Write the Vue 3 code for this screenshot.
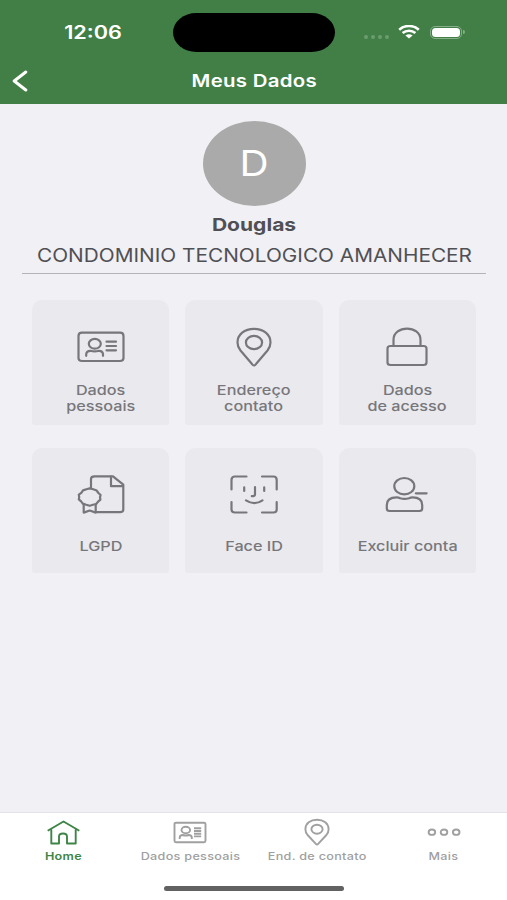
<template>
  <div class="screen">

    <header class="header">

      <div class="status">
        <div class="clock"><span class="wide">12:06</span></div>
        <div class="island"></div>
        <div class="signals">
          <div class="dots"><i v-for="n in 4" :key="n"></i></div>
          <svg class="wifi" width="22" height="14" viewBox="0 0 22 14">
            <path d="M1.2 4.7C6.6-.2 15.4-.2 20.8 4.7"/>
            <path d="M4.6 8.1C8.3 4.9 13.7 4.9 17.4 8.1"/>
            <path d="M7.4 10.6Q11 7.8 14.6 10.6L11 13.6Z"/>
          </svg>
          <div class="battery"><b></b></div>
        </div>
      </div>

      <div class="nav">
        <button class="back" type="button" aria-label="Voltar">
          <svg width="16" height="22" viewBox="0 0 16 22">
            <path d="M13.8 2L2.2 11L13.8 20"/>
          </svg>
        </button>
        <h1><span class="wide">Meus Dados</span></h1>
      </div>

    </header>

    <main class="content">

      <section class="profile">
        <div class="avatar"><span class="wide">D</span></div>
        <h2><span class="wide">Douglas</span></h2>
        <p><span class="wide">CONDOMINIO TECNOLOGICO AMANHECER</span></p>
      </section>

      <section class="grid">
        <button v-for="card in cards" :key="card.icon" class="card" type="button">
          <svg class="card-icon" width="50" height="42" viewBox="0 0 50 42">
            <path v-for="(d,i) in icons[card.icon]" :key="i" :d="d"/>
          </svg>
          <span class="label" :class="{ single: card.lines.length===1 }">
            <span v-for="line in card.lines" :key="line" class="wide">{{ line }}</span>
          </span>
        </button>
      </section>

    </main>

    <footer class="footer">
      <nav class="tabs">
        <a v-for="tab in tabs" :key="tab.label" class="tab" :class="{ active: tab.active }">
          <svg width="36" height="28" viewBox="0 0 36 28">
            <path v-for="(d,i) in icons[tab.icon]" :key="i" :d="d"/>
          </svg>
          <span class="wide">{{ tab.label }}</span>
        </a>
      </nav>
      <div class="indicator"></div>
    </footer>

  </div>
</template>

<script setup>

const icons={

card:[
'M6 6.7H44Q47.5 6.7 47.5 10V32Q47.5 35 44 35H6Q2.5 35 2.5 32V10Q2.5 6.7 6 6.7Z',
'M12.8 17.8a6 4.9 0 1 0 12 0a6 4.9 0 1 0 -12 0',
'M10.2 29.8V28.5Q10.2 24.8 14.5 24.8Q18.6 26 23 24.8Q27 24.8 27 28.5V29.8',
'M30.5 15.7H40M30.5 20H40M30.5 24.3H40'
],

pin:[
'M25 39.5Q24 39.5 22.8 37.8L11.5 24.5Q8.5 20.8 8.5 16.5C8.5 8.5 15.5 2.8 25 2.8S41.5 8.5 41.5 16.5Q41.5 20.8 38.5 24.5L27.2 37.8Q26 39.5 25 39.5Z',
'M16.9 16.5a8.1 6.6 0 1 0 16.2 0a8.1 6.6 0 1 0 -16.2 0'
],

lock:[
'M8.5 20H41.5Q44.5 20 44.5 22.5V36.5Q44.5 39 41.5 39H8.5Q5.5 39 5.5 36.5V22.5Q5.5 20 8.5 20Z',
'M11.5 19.5V14C11.5 -1.2 38.5 -1.2 38.5 14V19.5'
],

seal:[
'M15 14V5Q15 2.3 18.5 2.3H37L47.3 10.7V35.5Q47.3 38.2 44 38.2H20.5',
'M35 2.5V12.2H47',
'M13.7 14.4L17.2 15.2L20.7 16.6L22.4 19L24.6 21L24 23.2L24.4 25.6L22.1 27.6L20.2 30L17 30.8L13.7 31.8L10.2 30.8L6.8 29.6L5.1 27.4L2.8 25.4L3.2 23.2L2.8 20.6L5.3 18.8L7 16.4L10.4 15.2Z',
'M7.7 30.5V38.6L13.7 36.5L19.7 38.6V30.5'
],

face:[
'M2.5 15.5V6Q2.5 2.5 6 2.5H17.5M33 2.5H44.5Q47.7 2.5 47.7 6V15.5M47.7 28V35.5Q47.7 38.5 44.5 38.5H33M17.5 38.5H6Q2.5 38.5 2.5 35.5V28',
'M15.2 13.4V16.9M35.2 13.4V16.9M26 13.2V20.4Q26 22.3 22.8 22.2M17 26.3Q25.5 31.8 33.5 26.3'
],

remove:[
'M12.3 12.2a10 8.2 0 1 0 20 0a10 8.2 0 1 0 -20 0',
'M7.6 37Q4.8 37 4.8 34.6V31Q4.8 23.4 14.6 23.4Q16.6 23.4 18.2 24.2Q22.6 25.4 27 24.2Q28.6 23.4 30.6 23.4Q40.2 23.4 40.2 31V34.6Q40.2 37 37.4 37Z',
'M33.8 19.3H44.6'
],

home:[
'M2.7 12.8L18.5 3.5L34.3 12.8M6.3 11.5V25.5H14V18.5Q14 15.5 18 15.5T22 18.5V25.5H30.7V11.5'
],

tabCard:[
'M4 4.7H32Q33.5 4.7 33.5 6V22.7Q33.5 24.2 32 24.2H4Q2.5 24.2 2.5 22.7V6Q2.5 4.7 4 4.7Z',
'M9.5 12a4.3 3.3 0 1 0 8.6 0a4.3 3.3 0 1 0 -8.6 0',
'M7.7 21V19.8Q7.7 17 10.8 17Q13.8 18 16.8 17Q19.8 17 19.8 19.8V21',
'M22 10.3H29.2M22 13H29.2M22 15.7H29.2M22 18.4H29.2'
],

tabPin:[
'M18 26.6Q17.4 26.6 16.6 25.6L8.6 17Q6.4 14.4 6.4 11.2C6.4 5.4 11.4 1.7 18 1.7S29.6 5.4 29.6 11.2Q29.6 14.4 27.4 17L19.4 25.6Q18.6 26.6 18 26.6Z',
'M12.4 11.2a5.6 4.5 0 1 0 11.2 0a5.6 4.5 0 1 0 -11.2 0'
],

more:[
'M2.6 14.2a3.3 2.7 0 1 0 6.6 0a3.3 2.7 0 1 0 -6.6 0',
'M14.7 14.2a3.3 2.7 0 1 0 6.6 0a3.3 2.7 0 1 0 -6.6 0',
'M26.9 14.2a3.3 2.7 0 1 0 6.6 0a3.3 2.7 0 1 0 -6.6 0'
]

}

const cards=[
{icon:'card',lines:['Dados','pessoais']},
{icon:'pin',lines:['Endereço','contato']},
{icon:'lock',lines:['Dados','de acesso']},
{icon:'seal',lines:['LGPD']},
{icon:'face',lines:['Face ID']},
{icon:'remove',lines:['Excluir conta']}
]

const tabs=[
{icon:'home',label:'Home',active:true},
{icon:'tabCard',label:'Dados pessoais'},
{icon:'tabPin',label:'End. de contato'},
{icon:'more',label:'Mais'}
]

</script>

<style>

body{
margin:0;
background:#f1f0f5;
}

</style>

<style scoped>

.screen{
height:900px;
display:flex;
flex-direction:column;
overflow:hidden;
background:#f1f0f5;
font-family:Inter,"Liberation Sans",sans-serif;
color:#505054;
}

h1,h2,p{
margin:0;
}

button{
border:none;
background:none;
padding:0;
font:inherit;
color:inherit;
}

/* letterforms are wider than tall across the whole screen */
.wide{
display:inline-block;
white-space:nowrap;
transform:scaleX(1.2);
}

.header{
height:104px;
flex:none;
background:#417f46;
color:#fff;
}

.status{
height:58px;
padding-top:6px;
box-sizing:border-box;
display:grid;
grid-template-columns:173px 162px 1fr;
align-items:center;
}

.clock{
padding-left:13px;
text-align:center;
font-size:18px;
font-weight:600;
}

.island{
height:39px;
border-radius:24px/20px;
background:#000;
}

.signals{
display:flex;
align-items:center;
padding-left:29px;
}

.dots{
display:flex;
gap:3px;
padding-top:9px;
margin-right:9px;
}

.dots i{
width:4px;
height:4px;
border-radius:50%;
background:#6a9c6e;
}

.battery{
position:relative;
width:32px;
height:13px;
box-sizing:border-box;
margin-left:10px;
padding:1px;
border:1px solid #86af89;
border-radius:5px;
}

.battery b{
display:block;
width:28px;
height:9px;
border-radius:3.5px;
background:#fff;
}

.battery::after{
content:'';
position:absolute;
right:-4px;
top:3.5px;
width:2px;
height:4px;
border-radius:0 2px 2px 0;
background:#86af89;
}

.nav{
height:46px;
display:grid;
grid-template-columns:40px 1fr 40px;
align-items:center;
}

.back{
display:flex;
padding-left:12px;
}

h1{
padding-left:1px;
font-size:17px;
font-weight:600;
letter-spacing:.25px;
text-align:center;
}

.content{
flex:1;
}

.profile{
margin:0 21px 0 22px;
height:170px;
padding-top:17px;
box-sizing:border-box;
border-bottom:1px solid #b4b4b8;
display:flex;
flex-direction:column;
align-items:center;
}

.avatar{
width:103px;
height:85px;
border-radius:50%;
display:flex;
align-items:center;
justify-content:center;
background:#aaa;
color:#fff;
font-size:36px;
}

.avatar .wide{
margin-top:-2px;
transform:scaleX(1.12);
}

h2{
margin-top:6px;
font-size:18px;
line-height:26px;
font-weight:700;
}

h2 .wide{
transform:scaleX(1.17);
}

p{
margin-top:4px;
font-size:18.5px;
line-height:26px;
}

p .wide{
transform:scaleX(1.124);
}

.grid{
padding:26px 31px 0 32px;
display:grid;
grid-template-columns:repeat(3,1fr);
grid-auto-rows:125px;
gap:23px 16px;
}

.card{
display:flex;
flex-direction:column;
align-items:center;
justify-content:flex-start;
padding-top:26px;
border-radius:10px 10px 3px 3px;
background:#eae9ee;
color:#77777b;
}

svg path{
fill:none;
stroke:currentColor;
stroke-width:2;
stroke-linejoin:round;
}

.wifi path{
stroke-width:2.6;
}

.wifi path:last-child{
fill:currentColor;
stroke:none;
}

.back path{
stroke-width:3;
stroke-linecap:round;
}

.card-icon path{
stroke-width:2.2;
stroke-linecap:round;
}

.label{
display:flex;
flex-direction:column;
align-items:center;
margin-top:14px;
font-size:13.5px;
line-height:16px;
font-weight:500;
}

.label.single{
margin-top:22px;
}

.footer{
height:88px;
flex:none;
box-sizing:border-box;
border-top:1px solid #e4e3e8;
background:#fff;
display:flex;
flex-direction:column;
align-items:center;
}

.tabs{
width:100%;
height:73px;
display:grid;
grid-template-columns:repeat(4,1fr);
}

.tab{
display:flex;
flex-direction:column;
align-items:center;
padding-top:5px;
font-size:10.5px;
line-height:14px;
font-weight:500;
letter-spacing:.25px;
color:#a0a0a0;
}

.tab svg path{
stroke-width:1.9;
}

.tab .wide{
margin-top:4px;
}

.tab.active{
color:#3f8447;
font-weight:600;
}

.indicator{
width:180px;
height:5px;
border-radius:3px;
background:#626262;
}

</style>
